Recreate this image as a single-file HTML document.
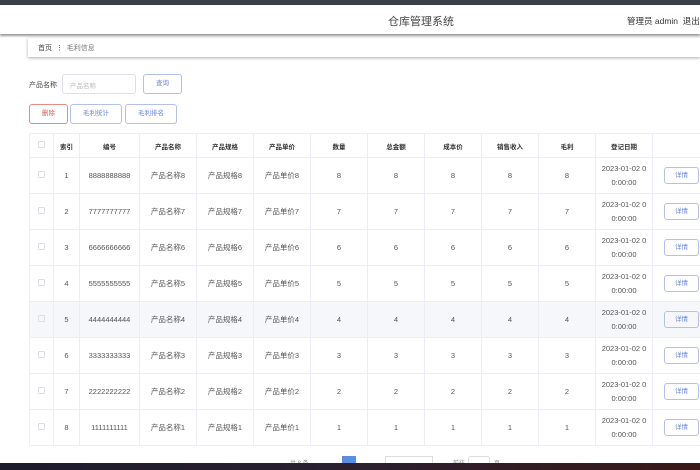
<!DOCTYPE html>
<html><head><meta charset="utf-8"><style>
*{margin:0;padding:0;box-sizing:border-box}
body{width:700px;height:470px;overflow:hidden;background:#fff;font-family:"Liberation Sans","Noto Sans CJK SC",sans-serif;position:relative;color:#606266}
.top{position:absolute;left:0;top:0;width:700px;height:5px;background:#3a3f4a}
.hdr{position:absolute;left:0;top:5px;width:700px;height:29px;background:#fff;box-shadow:0 2px 2px #999}
.hdr .t{position:absolute;left:388px;top:8px;font-size:11px;color:#444}
.hdr .u{position:absolute;left:627px;top:10px;font-size:8.5px;color:#333;white-space:nowrap}
.bc{position:absolute;left:28px;top:38px;width:672px;height:19px;box-shadow:0 1px 3px #aaa;font-size:7px;color:#444;padding:5px 10px}
.lbl{position:absolute;left:29px;top:80px;font-size:7px;color:#444}
.inp{position:absolute;left:62px;top:74px;width:74px;height:20px;border:1px solid #dcdfe6;border-radius:3px;font-size:6.5px;color:#bbb;padding:5px 7px}
.btn{position:absolute;height:20px;border:1px solid #b3c0e8;border-radius:3px;font-size:6.5px;color:#6b87d6;text-align:center;line-height:18px;background:#fff}
table{position:absolute;left:29px;top:133px;width:671px;border-collapse:collapse;table-layout:fixed;font-size:7.5px}
td,th{border:1px solid #ebeef5;text-align:center;color:#555;font-weight:normal;overflow:hidden;white-space:nowrap}
th{height:24px;font-weight:bold;color:#333;font-size:6.5px}
td{height:36px}
tr.h td{background:#f5f7fa}
.cb{display:inline-block;width:7px;height:7px;border:1px solid #dcdfe6;border-radius:1px}
.d{display:inline-block;width:35px;height:17px;border:1px solid #b3c0e8;border-radius:3px;color:#6b87d6;font-size:6.5px;line-height:15px;margin-left:11px;text-align:center}
.dt{font-size:7.5px;line-height:14px}
.pg{position:absolute;top:458px;font-size:6px;color:#888}
.bot{position:absolute;left:0;top:463px;width:700px;height:7px;background:linear-gradient(90deg,#1c1c2c,#2a2030 50%,#3a1818)}
</style></head><body>
<div class="top"></div>
<div class="hdr"><span class="t">仓库管理系统</span><span class="u">管理员 admin &nbsp;退出</span></div>
<div class="bc">首页 &nbsp;⋮ &nbsp;<span style="color:#777">毛利信息</span></div>
<div class="lbl">产品名称</div>
<div class="inp">产品名称</div>
<div class="btn" style="left:143px;top:74px;width:39px">查询</div>
<div class="btn" style="left:29px;top:104px;width:39px;border-color:#e68a8a;color:#e05555">删除</div>
<div class="btn" style="left:70px;top:104px;width:52px">毛利统计</div>
<div class="btn" style="left:125px;top:104px;width:52px">毛利排名</div>
<table>
<colgroup><col style="width:24px"><col style="width:26px"><col style="width:60px"><col style="width:57px"><col style="width:57px"><col style="width:57px"><col style="width:57px"><col style="width:57px"><col style="width:57px"><col style="width:57px"><col style="width:57px"><col style="width:57px"><col style="width:48px"></colgroup>
<tr><th><span class="cb"></span></th><th>索引</th><th>编号</th><th>产品名称</th><th>产品规格</th><th>产品单价</th><th>数量</th><th>总金额</th><th>成本价</th><th>销售收入</th><th>毛利</th><th>登记日期</th><th></th></tr>
<tr><td><span class="cb"></span></td><td>1</td><td>8888888888</td><td>产品名称8</td><td>产品规格8</td><td>产品单价8</td><td>8</td><td>8</td><td>8</td><td>8</td><td>8</td><td class="dt">2023-01-02 0<br>0:00:00</td><td style="text-align:left"><span class="d">详情</span></td></tr>
<tr><td><span class="cb"></span></td><td>2</td><td>7777777777</td><td>产品名称7</td><td>产品规格7</td><td>产品单价7</td><td>7</td><td>7</td><td>7</td><td>7</td><td>7</td><td class="dt">2023-01-02 0<br>0:00:00</td><td style="text-align:left"><span class="d">详情</span></td></tr>
<tr><td><span class="cb"></span></td><td>3</td><td>6666666666</td><td>产品名称6</td><td>产品规格6</td><td>产品单价6</td><td>6</td><td>6</td><td>6</td><td>6</td><td>6</td><td class="dt">2023-01-02 0<br>0:00:00</td><td style="text-align:left"><span class="d">详情</span></td></tr>
<tr><td><span class="cb"></span></td><td>4</td><td>5555555555</td><td>产品名称5</td><td>产品规格5</td><td>产品单价5</td><td>5</td><td>5</td><td>5</td><td>5</td><td>5</td><td class="dt">2023-01-02 0<br>0:00:00</td><td style="text-align:left"><span class="d">详情</span></td></tr>
<tr class="h"><td><span class="cb"></span></td><td>5</td><td>4444444444</td><td>产品名称4</td><td>产品规格4</td><td>产品单价4</td><td>4</td><td>4</td><td>4</td><td>4</td><td>4</td><td class="dt">2023-01-02 0<br>0:00:00</td><td style="text-align:left"><span class="d">详情</span></td></tr>
<tr><td><span class="cb"></span></td><td>6</td><td>3333333333</td><td>产品名称3</td><td>产品规格3</td><td>产品单价3</td><td>3</td><td>3</td><td>3</td><td>3</td><td>3</td><td class="dt">2023-01-02 0<br>0:00:00</td><td style="text-align:left"><span class="d">详情</span></td></tr>
<tr><td><span class="cb"></span></td><td>7</td><td>2222222222</td><td>产品名称2</td><td>产品规格2</td><td>产品单价2</td><td>2</td><td>2</td><td>2</td><td>2</td><td>2</td><td class="dt">2023-01-02 0<br>0:00:00</td><td style="text-align:left"><span class="d">详情</span></td></tr>
<tr><td><span class="cb"></span></td><td>8</td><td>1111111111</td><td>产品名称1</td><td>产品规格1</td><td>产品单价1</td><td>1</td><td>1</td><td>1</td><td>1</td><td>1</td><td class="dt">2023-01-02 0<br>0:00:00</td><td style="text-align:left"><span class="d">详情</span></td></tr>
</table>
<div class="pg" style="left:290px">共 8 条</div>
<div style="position:absolute;left:342px;top:456px;width:14px;height:10px;background:#5b8de0"></div>
<div style="position:absolute;left:385px;top:456px;width:48px;height:10px;border:1px solid #ddd"></div>
<div class="pg" style="left:453px">前往</div>
<div style="position:absolute;left:468px;top:456px;width:22px;height:10px;border:1px solid #ddd;border-radius:3px"></div>
<div class="pg" style="left:494px">页</div>
<div class="bot"></div>
</body></html>
